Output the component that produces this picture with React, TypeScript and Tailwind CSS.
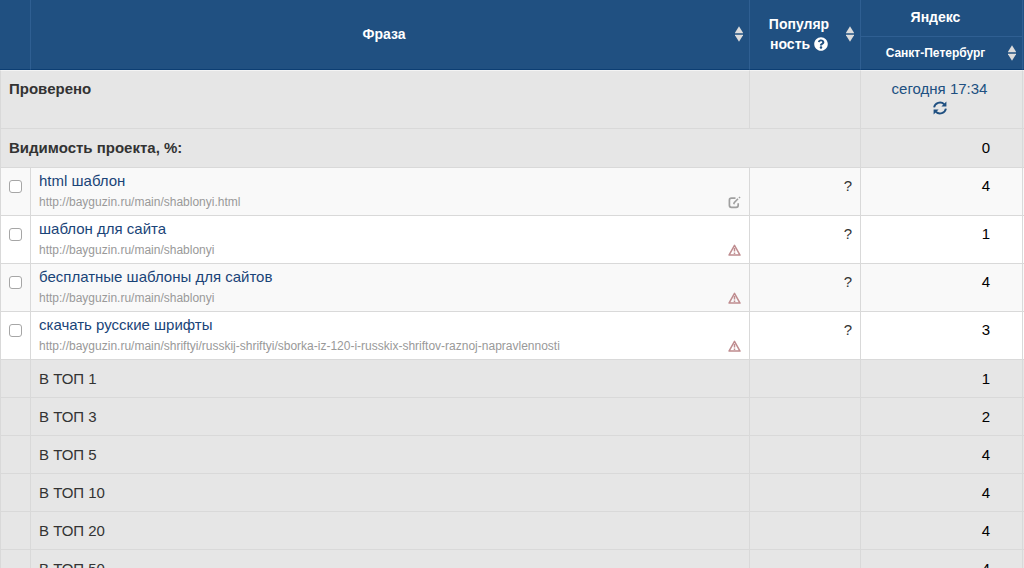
import React from "react";
import { FaQuestionCircle } from "react-icons/fa";

type Phrase = {
  text: string;
  url: string;
  status: "edit" | "warning";
  position: number;
};

const phrases: Phrase[] = [
  { text: "html шаблон", url: "http://bayguzin.ru/main/shablonyi.html", status: "edit", position: 4 },
  { text: "шаблон для сайта", url: "http://bayguzin.ru/main/shablonyi", status: "warning", position: 1 },
  { text: "бесплатные шаблоны для сайтов", url: "http://bayguzin.ru/main/shablonyi", status: "warning", position: 4 },
  {
    text: "скачать русские шрифты",
    url: "http://bayguzin.ru/main/shriftyi/russkij-shriftyi/sborka-iz-120-i-russkix-shriftov-raznoj-napravlennosti",
    status: "warning",
    position: 3,
  },
];

const tops = [
  { label: "В ТОП 1", count: 1 },
  { label: "В ТОП 3", count: 2 },
  { label: "В ТОП 5", count: 4 },
  { label: "В ТОП 10", count: 4 },
  { label: "В ТОП 20", count: 4 },
  { label: "В ТОП 50", count: 4 },
];

function SortButton({ label }: { label: string }) {
  return (
    <button type="button" aria-label={label} className="shrink-0 cursor-pointer">
      <svg viewBox="0 0 8 16" className="block h-4 w-2 fill-[#dcdcdc]">
        <path d="M4 0.3 8.2 7.2H-0.2z" />
        <path d="M-0.2 8.8h8.4L4 15.7z" />
      </svg>
    </button>
  );
}

function RefreshIcon() {
  return (
    <svg viewBox="0 0 14 14" className="block size-3.5 fill-none stroke-current">
      <path d="M1.1 6.4A6 5.6 0 0 1 11.2 3.2M12.9 7.6A6 5.6 0 0 1 2.8 10.8" strokeWidth="1.9" />
      <path d="M13.4 0.4V5.4H8.4zM0.6 13.6V8.6H5.6z" className="fill-current stroke-none" />
    </svg>
  );
}

function EditIcon() {
  return (
    <svg viewBox="0 0 13 13" className="block size-[13px] fill-none stroke-[#a0a0a0]">
      <path d="M7.5 2.2H3.4Q1.4 2.2 1.4 4.2V9.3Q1.4 11.3 3.4 11.3H8.2Q10.2 11.3 10.2 9.3V7.2" strokeWidth="1.7" />
      <path d="M5.8 8.2 6.2 6.6 10 2.8" strokeWidth="1.6" />
      <path d="M11 2 12 1" strokeWidth="1.6" />
    </svg>
  );
}

function WarningIcon() {
  return (
    <svg viewBox="0 0 13 12" className="block h-3 w-[13px] fill-none stroke-[#bf8c8f]">
      <path d="M6.5 1.3 12 11.1H1z" strokeWidth="1.5" strokeLinejoin="round" />
      <path d="M6.5 4v3.6M6.5 8.5v1.4" strokeWidth="1.5" />
    </svg>
  );
}

const headCell = "border-l border-[#2f5f92] p-0 font-bold";
const grayCell = "border-l border-t border-[#d9d9d9] bg-[#e6e6e6]";
const rowCell = "border-l border-t border-[#d9d9d9]";
const checkedCell = "border-l border-t border-l-[#d9d9d9] border-t-[#f4f4f4] bg-[#e6e6e6]";

export default function App() {
  return (
    <main className="h-screen overflow-hidden bg-[#e6e6e6] font-['Liberation_Sans',Arial,sans-serif] text-[15px] leading-5 text-[#333]">
      <table className="w-full table-fixed border-separate border-spacing-0">
        <colgroup>
          <col className="w-[30px]" />
          <col />
          <col className="w-[111px]" />
          <col className="w-[162px]" />
          <col className="w-[2px]" />
        </colgroup>
        <thead className="bg-[#205081] text-sm leading-5 text-white">
          <tr className="h-9">
            <td rowSpan={2} className="border-b border-b-[#0c3e73] p-0" />
            <th rowSpan={2} className={`${headCell} border-b border-b-[#0c3e73]`}>
              <div className="flex items-center gap-1.5 pb-0.5 pl-2 pr-1.5">
                <span className="grow">Фраза</span>
                <SortButton label="Сортировать по фразе" />
              </div>
            </th>
            <th rowSpan={2} className={`${headCell} border-b border-b-[#0c3e73]`}>
              <div className="flex items-center gap-1.5 pb-0.5 pl-2 pr-1.5">
                <span className="grow">
                  Популяр
                  <br />
                  ность <FaQuestionCircle className="inline size-3.5 align-[-2px]" />
                </span>
                <SortButton label="Сортировать по популярности" />
              </div>
            </th>
            <th className={headCell}>
              <div className="pb-0.5 pl-2 pr-5">Яндекс</div>
            </th>
            <td rowSpan={2} className="border-b border-l border-b-[#0c3e73] border-l-[#2f5f92] p-0" />
          </tr>
          <tr className="h-[34px]">
            <th className={`${headCell} border-b border-t border-b-[#0c3e73]`}>
              <div className="flex items-center gap-1.5 pl-2 pr-1.5 text-xs leading-4">
                <span className="grow whitespace-nowrap">Санкт-Петербург</span>
                <SortButton label="Сортировать по Санкт-Петербургу" />
              </div>
            </th>
          </tr>
        </thead>
        <tbody>
          <tr className="h-[58px] align-top">
            <th colSpan={2} className={`${checkedCell} p-2 text-left`}>
              Проверено
            </th>
            <td className={checkedCell} />
            <td className={`${checkedCell} py-2 pl-1 pr-2 text-[#205081]`}>
              <div className="flex flex-col items-center gap-0.5">
                <a href="#today">сегодня 17:34</a>
                <button type="button" aria-label="Обновить" className="cursor-pointer">
                  <RefreshIcon />
                </button>
              </div>
            </td>
            <td className={`${checkedCell} p-0`} />
          </tr>
          <tr className="h-[39px] align-top">
            <th colSpan={3} className={`${grayCell} px-2 pb-0 pt-[9px] text-left`}>
              Видимость проекта, %:
            </th>
            <td className={`${grayCell} pb-0 pr-8 pt-[9px] text-right text-black`}>0</td>
            <td className={`${grayCell} p-0`} />
          </tr>
          {phrases.map((phrase, i) => (
            <tr key={phrase.text} className="h-12 bg-white align-top odd:bg-[#f9f9f9]">
              <td className={`${rowCell} p-0`}>
                <label className="block pl-2 pt-3">
                  <input
                    type="checkbox"
                    aria-label={phrase.text}
                    className="block size-[13px] appearance-none rounded-[3px] border border-[#a6a6a6] bg-white checked:bg-[#205081]"
                  />
                </label>
              </td>
              <td className={`${rowCell} px-2 pb-0 pt-[3px]`}>
                <a href={`#phrase-${i + 1}`} className="block text-[#1a4478]">
                  {phrase.text}
                </a>
                <div className="flex items-center justify-between pt-[3px]">
                  <a href={phrase.url} className="text-xs leading-4 text-[#999]">
                    {phrase.url}
                  </a>
                  {phrase.status === "edit" ? <EditIcon /> : <WarningIcon />}
                </div>
              </td>
              <td className={`${rowCell} pb-0 pr-2 pt-2 text-right`}>?</td>
              <td className={`${rowCell} pb-0 pr-8 pt-2 text-right text-black`}>{phrase.position}</td>
              <td className={`${rowCell} p-0`} />
            </tr>
          ))}
          {tops.map((top) => (
            <tr key={top.label} className="h-[38px] align-top">
              <td className={`${grayCell} p-0`} />
              <td className={`${grayCell} px-2 pb-0 pt-[9px]`}>{top.label}</td>
              <td className={grayCell} />
              <td className={`${grayCell} pb-0 pr-8 pt-[9px] text-right text-black`}>{top.count}</td>
              <td className={`${grayCell} p-0`} />
            </tr>
          ))}
        </tbody>
      </table>
    </main>
  );
}
